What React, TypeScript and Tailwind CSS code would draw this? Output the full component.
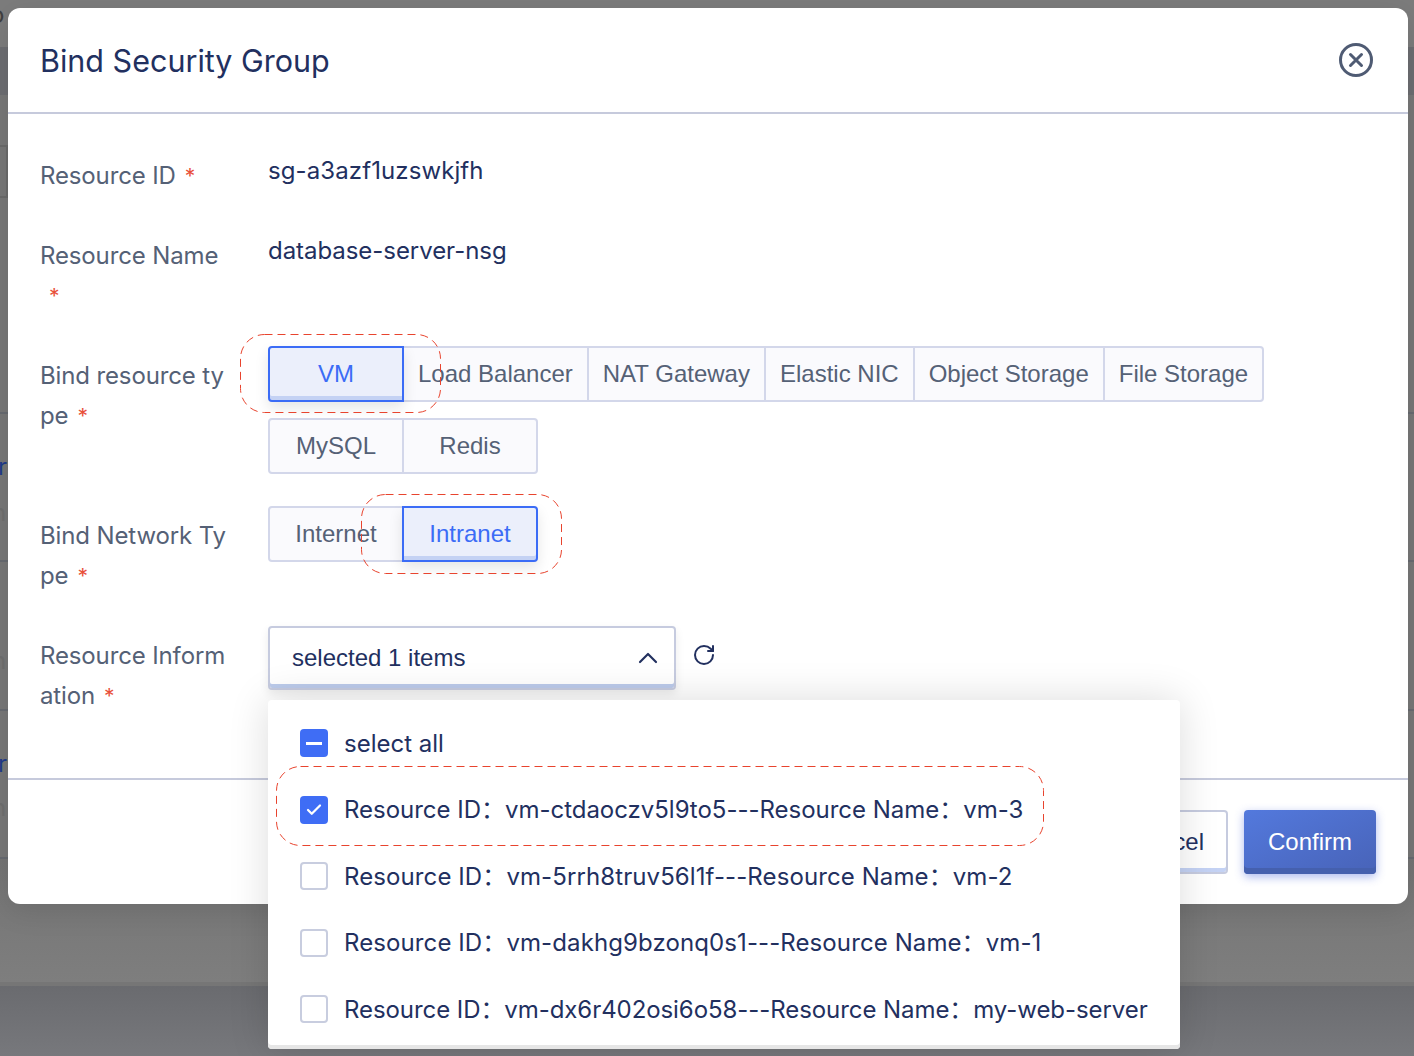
import { ChevronUp, RotateCw, Check } from "lucide-react";

const inter = "font-['Inter','Noto_Sans_CJK_SC',sans-serif]";
const arial = "font-['Liberation_Sans',sans-serif]";

const bindTypes = ["VM", "Load Balancer", "NAT Gateway", "Elastic NIC", "Object Storage", "File Storage"];
const resources = [
  { id: "vm-ctdaoczv5l9to5", name: "vm-3", checked: true, fit: "tracking-[-0.02px]" },
  { id: "vm-5rrh8truv56l1f", name: "vm-2", fit: "tracking-[0.1px]" },
  { id: "vm-dakhg9bzonq0s1", name: "vm-1", fit: "tracking-[0.1px]" },
  { id: "vm-dx6r402osi6o58", name: "my-web-server", fit: "tracking-[-0.07px]" },
];

const Star = () => <span className="inline-block ml-[9px] text-[21px] leading-[20px] text-[#e8503a]">*</span>;

const Label = ({ text }: { text: string }) => (
  <div className="w-[188px] shrink-0 mr-[40px] pt-[10px] text-[24px] leading-[40px] tracking-[-0.13px] text-[#556176] break-all">
    {text}
    <Star />
  </div>
);

const Segment = ({ label, active, first, last }: { label: string; active?: boolean; first?: boolean; last?: boolean }) => (
  <div
    className={
      "relative h-[56px] min-w-[136px] px-[14px] border-2 flex items-center justify-center text-[24px] " +
      arial +
      (first ? " rounded-l-[4px]" : " -ml-[2px]") +
      (last ? " rounded-r-[4px]" : "") +
      (active
        ? " z-10 border-[#3b6cf6] bg-[#ebeffb] text-[#3b6cf6] shadow-[inset_0_-4px_0_#c4d2f4,0_6px_14px_rgba(0,0,0,0.1)]"
        : " border-[#d3d7ea] bg-[#fafafd] text-[#556176]")
    }
  >
    {label}
  </div>
);

const DashedBox = ({ className, w, h }: { className: string; w: number; h: number }) => (
  <svg className={"absolute z-40 pointer-events-none " + className} width={w} height={h}>
    <rect x="0.5" y="0.5" width={w - 1} height={h - 1} rx="24" fill="none" stroke="#e8442e" strokeWidth="1" strokeDasharray="8 5" />
  </svg>
);

const Box = ({ state }: { state?: "all" | "on" }) => {
  if (state === "all")
    return (
      <span className="w-[28px] h-[28px] shrink-0 rounded-[4px] bg-[#3f6df5] flex items-center justify-center">
        <span className="w-[16px] h-[3px] bg-white" />
      </span>
    );
  if (state === "on")
    return (
      <span className="w-[28px] h-[28px] shrink-0 rounded-[4px] bg-[#3f6df5] flex items-center justify-center">
        <Check className="w-[18px] h-[18px] text-white" strokeWidth={3} />
      </span>
    );
  return <span className="w-[28px] h-[28px] shrink-0 rounded-[4px] border-2 border-[#c8cddf] bg-white" />;
};

export default function App() {
  return (
    <div className={"relative w-[1414px] h-[1056px] overflow-hidden bg-[#777777] " + inter}>
      {/* the page behind the mask, only its edges show */}
      <div className="flex flex-col text-[24px] leading-[30px]">
        <div className="h-[47px] bg-[#7c7c7c] text-[#3f3f3f]">
          <div className="-ml-[10px]">o</div>
        </div>
        <div className="h-[48px] bg-[#6c6d71]" />
        <div className="h-[50px]" />
        <div className="h-[53px] w-[8px] border-2 border-l-0 border-[#6a6a6a]" />
        <div className="h-[214px]" />
        <div className="h-[148px] border-t-2 border-[#676a70] pt-[38px]">
          <div className="text-[#1f3a8a] -ml-[2px]">r</div>
          <div className="text-[#6e6e6e] -ml-[8px] mt-[16px]">n</div>
        </div>
        <div className="h-[149px] border-t-2 border-[#676a70] pt-[84px]">
          <div className="text-[#6e6e6e] -ml-[8px]">n</div>
        </div>
        <div className="h-[148px] border-t-2 border-[#676a70] pt-[38px]">
          <div className="text-[#1f3a8a] -ml-[2px]">r</div>
          <div className="text-[#6e6e6e] -ml-[8px] mt-[14px]">n</div>
        </div>
        <div className="h-[125px] border-t-2 border-[#676a70] bg-gradient-to-b from-[#747474] to-[#7e7e7e]" />
        <div className="h-[4px] bg-[#767676]" />
        <div className="h-[70px] bg-gradient-to-b from-[#6a6b6f] to-[#77787c]" />
      </div>

      {/* modal */}
      <div className="absolute left-2 top-2 w-[1400px] h-[896px] bg-white rounded-[12px] shadow-[0_6px_30px_rgba(0,0,0,0.1)]">
        <div className="h-[106px] border-b-2 border-[#c6cadc] pl-[32px] pr-[35px] flex items-center justify-between">
          <h1 className="text-[30.5px] font-normal text-[#22305f] mt-[1px]">Bind Security Group</h1>
          <svg width="34" height="34" viewBox="0 0 34 34" fill="none" stroke="#4f5b73" strokeWidth="3" strokeLinecap="round">
            <circle cx="17" cy="17" r="15.5" />
            <path d="M11.5 11.5l11 11M22.5 11.5l-11 11" />
          </svg>
        </div>

        <div className="h-[664px] pt-[32px] pl-[32px] flex flex-col">
          <div className="flex mb-[30px]">
            <Label text="Resource ID" />
            <div className="pt-[5px] text-[24px] leading-[40px] tracking-[0.1px] text-[#22305f]">sg-a3azf1uzswkjfh</div>
          </div>
          <div className="flex mb-[30px]">
            <Label text="Resource Name" />
            <div className="pt-[5px] text-[24px] leading-[40px] tracking-[-0.05px] text-[#22305f]">database-server-nsg</div>
          </div>
          <div className="flex mb-[32px]">
            <Label text="Bind resource type" />
            <div className="flex flex-col gap-[16px]">
              <div className="flex">
                {bindTypes.map((t, i) => (
                  <Segment key={t} label={t} active={i === 0} first={i === 0} last={i === bindTypes.length - 1} />
                ))}
              </div>
              <div className="flex">
                <Segment label="MySQL" first />
                <Segment label="Redis" last />
              </div>
            </div>
          </div>
          <div className="flex mb-[30px]">
            <Label text="Bind Network Type" />
            <div className="flex">
              <Segment label="Internet" first />
              <Segment label="Intranet" active last />
            </div>
          </div>
          <div className="flex">
            <Label text="Resource Information" />
            <div className={"w-[408px] h-[64px] rounded-[4px] border-2 border-[#c6cbdf] bg-white shadow-[inset_0_-4px_0_#bccbeb,0_4px_10px_rgba(0,0,0,0.08)] flex items-center justify-between pl-[22px] pr-[10px] text-[24px] text-[#22305f] " + arial}>
              selected 1 items
              <ChevronUp className="w-[32px] h-[32px] text-[#22305f]" strokeWidth={1.6} />
            </div>
            <RotateCw className="ml-[16px] mt-[17px] w-[24px] h-[24px] text-[#22305f]" strokeWidth={2} />
          </div>
        </div>

        <div className="border-t-2 border-[#c6cadc] h-[126px] flex justify-end gap-[16px] pt-[30px] pr-[32px]">
          <div className={"h-[64px] px-[22px] rounded-[4px] border-2 border-[#c6cbdf] bg-white shadow-[inset_0_-4px_0_#c4d2f4] flex items-center justify-center text-[24px] text-[#22305f] " + arial}>
            Cancel
          </div>
          <div className={"h-[64px] px-[24px] rounded-[4px] bg-gradient-to-br from-[#5379dd] to-[#4863b8] shadow-[inset_0_-6px_0_#4560ae,0_3px_10px_rgba(70,100,220,0.45)] flex items-center justify-center text-[24px] text-white " + arial}>
            Confirm
          </div>
        </div>
      </div>

      {/* open dropdown */}
      <div className="absolute z-30 left-[268px] top-[700px] w-[912px] h-[349px] pt-[10px] rounded-[4px] bg-white shadow-[inset_0_-4px_0_#e6e6e6,0_0_40px_rgba(0,0,0,0.14)] text-[24px] text-[#22305f]">
        <div className="h-[66.5px] pl-[32px] flex items-center gap-[16px]">
          <Box state="all" />
          <span className="pt-[1px]">select all</span>
        </div>
        {resources.map((r) => (
          <div key={r.id} className="h-[66.5px] pl-[32px] flex items-center gap-[16px]">
            <Box state={r.checked ? "on" : undefined} />
            <span className={"pt-[1px] whitespace-nowrap " + r.fit}>
              Resource ID：{r.id}---Resource Name：{r.name}
            </span>
          </div>
        ))}
      </div>

      <DashedBox className="left-[240px] top-[334px]" w={201} h={79} />
      <DashedBox className="left-[361px] top-[494px]" w={201} h={80} />
      <DashedBox className="left-[276px] top-[766px]" w={768} h={80} />
    </div>
  );
}
